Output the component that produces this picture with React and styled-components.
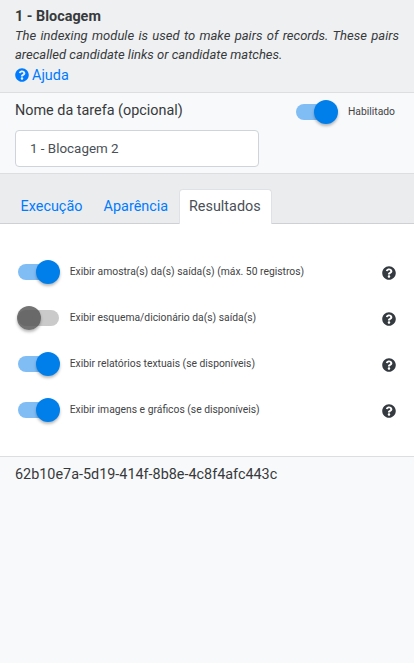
import React from "react";
import styled, { createGlobalStyle } from "styled-components";
import { FaQuestionCircle } from "react-icons/fa";

const GlobalStyle = createGlobalStyle`
  *, *::before, *::after { box-sizing: border-box; }
  body {
    margin: 0;
    background: #f8f9fb;
    color: #373a3c;
    font: 400 14.4px/20px Roboto, sans-serif;
  }
`;

const Panel = styled.main`
  display: flex;
  flex-direction: column;
  min-height: 663px;
`;

const Header = styled.header`
  height: 93px;
  padding: 7px 15px 0;
  background: #eff0f2;
  border-bottom: 1px solid #dcdee0;
`;

const Title = styled.h1`
  margin: 0;
  font-size: 14.4px;
  font-weight: 700;
  line-height: 19px;
`;

const Description = styled.p`
  margin: 0;
  font-size: 13px;
  font-style: italic;
  line-height: 19px;
  text-align: justify;
`;

const HelpLink = styled.a`
  display: flex;
  align-items: center;
  gap: 3px;
  height: 23px;
  color: #007bff;
  text-decoration: none;
  svg { width: 14px; height: 14px; margin-bottom: 2px; }
`;

const TaskSection = styled.section`
  display: flex;
  justify-content: space-between;
  height: 81px;
  padding: 7px 19px 0 15px;
  border-bottom: 1px solid #dcdee0;
`;

const Field = styled.label`
  display: flex;
  flex-direction: column;
  gap: 9px;
  width: 244px;
  padding-top: 1px;
`;

const TextInput = styled.input`
  width: 100%;
  height: 37px;
  padding: 0 14px;
  border: 1px solid #ced4da;
  border-radius: 4px;
  background: #fff;
  color: #495057;
  font: 400 13.4px Roboto, sans-serif;
`;

const TabBar = styled.nav`
  display: flex;
  align-items: flex-end;
  height: 50px;
  padding-left: 11px;
  background: #ebecee;
  box-shadow: inset 0 -1px #ced0d3;
`;

const Tab = styled.a`
  height: 35px;
  width: ${(p) => p.$width}px;
  padding: 7px 0 0 ${(p) => (p.$active ? 9 : 8.6)}px;
  border: 1px solid ${(p) => (p.$active ? "#dee2e6" : "transparent")};
  border-bottom: 0;
  border-radius: 4px 4px 0 0;
  background: ${(p) => (p.$active ? "#fff" : "transparent")};
  color: ${(p) => (p.$active ? "#495057" : "#007bff")};
  text-decoration: none;
`;

const Options = styled.section`
  height: 233px;
  padding: 25px 18px 0 17px;
  background: #fff;
  border-bottom: 1px solid #dcdee0;
`;

const OptionRow = styled.div`
  display: flex;
  justify-content: space-between;
  height: 46px;
`;

const HelpIcon = styled(FaQuestionCircle)`
  width: 14px;
  height: 14px;
  margin-top: 17px;
  color: #343a40;
`;

const SwitchLabel = styled.label`
  display: flex;
  align-items: center;
  gap: 9.7px;
  height: ${(p) => p.$height}px;
  color: #424446;
  font-size: 10.34px;
  line-height: 16px;
  white-space: nowrap;
`;

const SwitchText = styled.span`
  margin-top: -1px;
`;

const Track = styled.span`
  display: flex;
  align-items: center;
  justify-content: ${(p) => (p.$on ? "flex-end" : "flex-start")};
  width: 41px;
  height: 16px;
  margin: 0 1px;
  border-radius: 8px;
  background: ${(p) => (p.$on ? "#80bdf5" : "#cacaca")};
`;

const Knob = styled.span`
  flex: none;
  width: 24px;
  height: 24px;
  margin: 0 -1px;
  border-radius: 50%;
  background: ${(p) => (p.$on ? "#007feb" : "rgba(80, 80, 80, 0.8)")};
  box-shadow: 0 2px 3px rgba(0, 0, 0, 0.28);
`;

const Footer = styled.footer`
  padding: 8px 15px;
`;

function Switch({ on, height, children }) {
  return (
    <SwitchLabel $height={height}>
      <Track $on={on}><Knob $on={on} /></Track>
      <SwitchText>{children}</SwitchText>
    </SwitchLabel>
  );
}

const options = [
  { text: "Exibir amostra(s) da(s) saída(s) (máx. 50 registros)", on: true },
  { text: "Exibir esquema/dicionário da(s) saída(s)", on: false },
  { text: "Exibir relatórios textuais (se disponíveis)", on: true },
  { text: "Exibir imagens e gráficos (se disponíveis)", on: true },
];

export default function App() {
  return (
    <Panel>
      <GlobalStyle />
      <Header>
        <Title>1 - Blocagem</Title>
        <Description>
          The indexing module is used to make pairs of records. These pairs arecalled candidate links or candidate matches.
        </Description>
        <HelpLink href="#"><FaQuestionCircle />Ajuda</HelpLink>
      </Header>
      <TaskSection>
        <Field>
          Nome da tarefa (opcional)
          <TextInput defaultValue="1 - Blocagem 2" />
        </Field>
        <Switch on height={24}>Habilitado</Switch>
      </TaskSection>
      <TabBar>
        <Tab href="#" $width={83}>Execução</Tab>
        <Tab href="#" $width={85}>Aparência</Tab>
        <Tab href="#" $active $width={93}>Resultados</Tab>
      </TabBar>
      <Options>
        {options.map((o) => (
          <OptionRow key={o.text}>
            <Switch on={o.on} height={46}>{o.text}</Switch>
            <HelpIcon />
          </OptionRow>
        ))}
      </Options>
      <Footer>62b10e7a-5d19-414f-8b8e-4c8f4afc443c</Footer>
    </Panel>
  );
}
